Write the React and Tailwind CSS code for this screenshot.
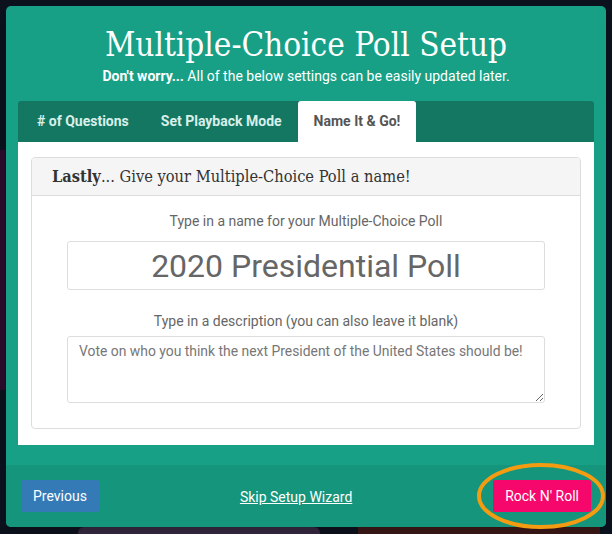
import React from 'react';

const tabs = ['# of Questions', 'Set Playback Mode', 'Name It & Go!'];

const App = () => {
    return (
        <div className="relative w-[612px] h-[534px] overflow-hidden bg-[#0c121d]" style={{ fontFamily: 'Roboto, sans-serif' }}>
            {/* background bits behind the modal */}
            <div className="absolute left-0 top-[150px] w-[20px] h-[240px] bg-[#2a0b2b]" />
            <div className="absolute left-[78px] top-[527px] w-[242px] h-[10px] rounded-t-[6px] bg-[#34283f]" />
            <div className="absolute left-[358px] top-[527px] w-[242px] h-[10px] bg-[#3b1818]" />

            <div className="relative px-[6px] pt-[6px]">
                <div className="w-[600px] h-[521px] rounded-[5px] bg-[#17a086] flex flex-col overflow-hidden shadow-lg">
                    {/* header */}
                    <div className="text-center text-white pt-[20px]">
                        <h1 className="text-[33px] leading-[38px] font-light font-stretch-condensed" style={{ fontFamily: '"DejaVu Serif", serif' }}>
                            Multiple-Choice Poll Setup
                        </h1>
                        <p className="mt-[3px] text-[14px] leading-[18px]">
                            <span className="font-bold">Don't worry...</span> All of the below settings can be easily updated later.
                        </p>
                    </div>

                    {/* tabs + panel */}
                    <div className="mx-[12px] mt-[16px]">
                        <div className="flex h-[41px] bg-[#137762] rounded-t-[3px] pl-[3px]">
                            {tabs.map((tab, i) => (
                                <div
                                    key={tab}
                                    className={
                                        i === 2
                                            ? 'flex items-center px-[16px] bg-white text-[#555] font-bold text-[14px] rounded-t-[3px]'
                                            : 'flex items-center px-[16px] text-[#d9efe9] font-bold text-[14px]'
                                    }
                                >
                                    {tab}
                                </div>
                            ))}
                        </div>

                        <div className="bg-white h-[303px] px-[13px] pt-[15px]">
                            <div className="border border-[#dddddd] rounded-[4px] h-[272px] overflow-hidden">
                                <div className="h-[38px] bg-[#f5f5f5] border-b border-[#dddddd] flex items-center px-[20px] pt-[2px] text-[16.3px] text-[#333] font-stretch-condensed" style={{ fontFamily: '"DejaVu Serif", serif' }}>
                                    <span className="font-bold">Lastly</span>... Give your Multiple-Choice Poll a name!
                                </div>
                                <div className="px-[35px] pt-[15px] text-center">
                                    <label className="block text-[14px] leading-[20px] text-[#666]">
                                        Type in a name for your Multiple-Choice Poll
                                    </label>
                                    <input
                                        readOnly
                                        value="2020 Presidential Poll"
                                        className="mt-[10px] w-full h-[49px] border border-[#dddddd] rounded-[3px] text-center text-[32px] text-[#666] outline-none"
                                    />
                                    <label className="block mt-[21px] text-[14px] leading-[20px] text-[#666]">
                                        Type in a description (you can also leave it blank)
                                    </label>
                                    <textarea
                                        readOnly
                                        value="Vote on who you think the next President of the United States should be!"
                                        className="mt-[5px] block w-full h-[67px] border border-[#dddddd] rounded-[3px] px-[11px] py-[5px] text-[13.9px] leading-[18px] text-[#777] text-left outline-none"
                                    />
                                </div>
                            </div>
                        </div>
                    </div>

                    {/* footer */}
                    <div className="mt-[20px] flex-1 bg-[#15957c] px-[15px] pt-[15px] flex items-start relative">
                        <button className="h-[32px] px-[12px] bg-[#337ab7] text-white text-[14px] rounded-[2px]">
                            Previous
                        </button>
                        <a className="ml-[141px] mt-[7px] text-white text-[14px] underline">Skip Setup Wizard</a>
                        <button className="ml-auto h-[32px] px-[12px] bg-[#f5076b] text-white text-[14px] rounded-[2px]">
                            Rock N' Roll
                        </button>
                    </div>
                </div>
            </div>

            {/* highlight ring around the primary button */}
            <svg className="absolute left-[476px] top-[462px]" width="130" height="68" viewBox="0 0 130 68">
                <ellipse cx="65" cy="34" rx="62" ry="31" fill="none" stroke="#f39c12" strokeWidth="4" />
            </svg>
        </div>
    );
};

export default App;
